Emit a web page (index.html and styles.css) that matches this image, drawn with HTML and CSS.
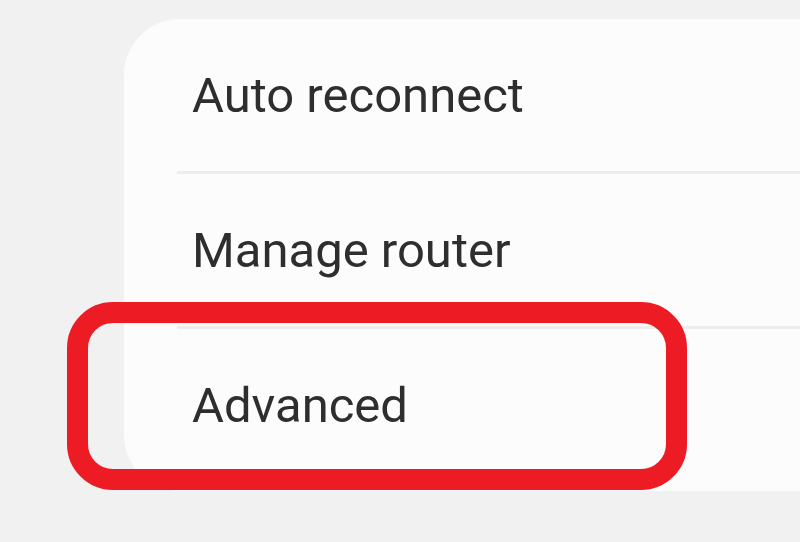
FILE: index.html
```html
<!DOCTYPE html>
<html lang="en">
<head>
    <meta charset="UTF-8">
    <meta name="viewport" content="width=device-width, initial-scale=1.0">
    <title>Wi-Fi settings</title>
    <link rel="stylesheet" href="styles.css">
</head>
<body>
    <div class="settings-card">
        <div class="settings-row">Auto reconnect</div>
        <div class="settings-row">Manage router</div>
        <div class="settings-row">Advanced</div>
    </div>
    <div class="highlight"></div>
</body>
</html>
```

FILE: styles.css
```css
body {
    margin: 0;
    background-color: #f1f1f1;
    font-family: Roboto, 'Noto Sans', sans-serif;
    color: #2e2e2e;
    height: 542px;
    overflow: hidden;
    position: relative;
}

.settings-card {
    margin: 19px 0 0 124px;
    background: #fcfcfc;
    border-radius: 56px 0 0 56px;
    padding-bottom: 10px;
}

.settings-row {
    height: 152px;
    display: flex;
    align-items: center;
    padding-left: 68px;
    font-size: 49px;
}

    .settings-row + .settings-row {
        border-top: 3px solid #ededed;
        margin-left: 53px;
        padding-left: 15px;
    }

.highlight {
    position: absolute;
    left: 67px;
    top: 302px;
    width: 578px;
    height: 146px;
    border: 21px solid #ed1c24;
    border-radius: 46px;
}
```
